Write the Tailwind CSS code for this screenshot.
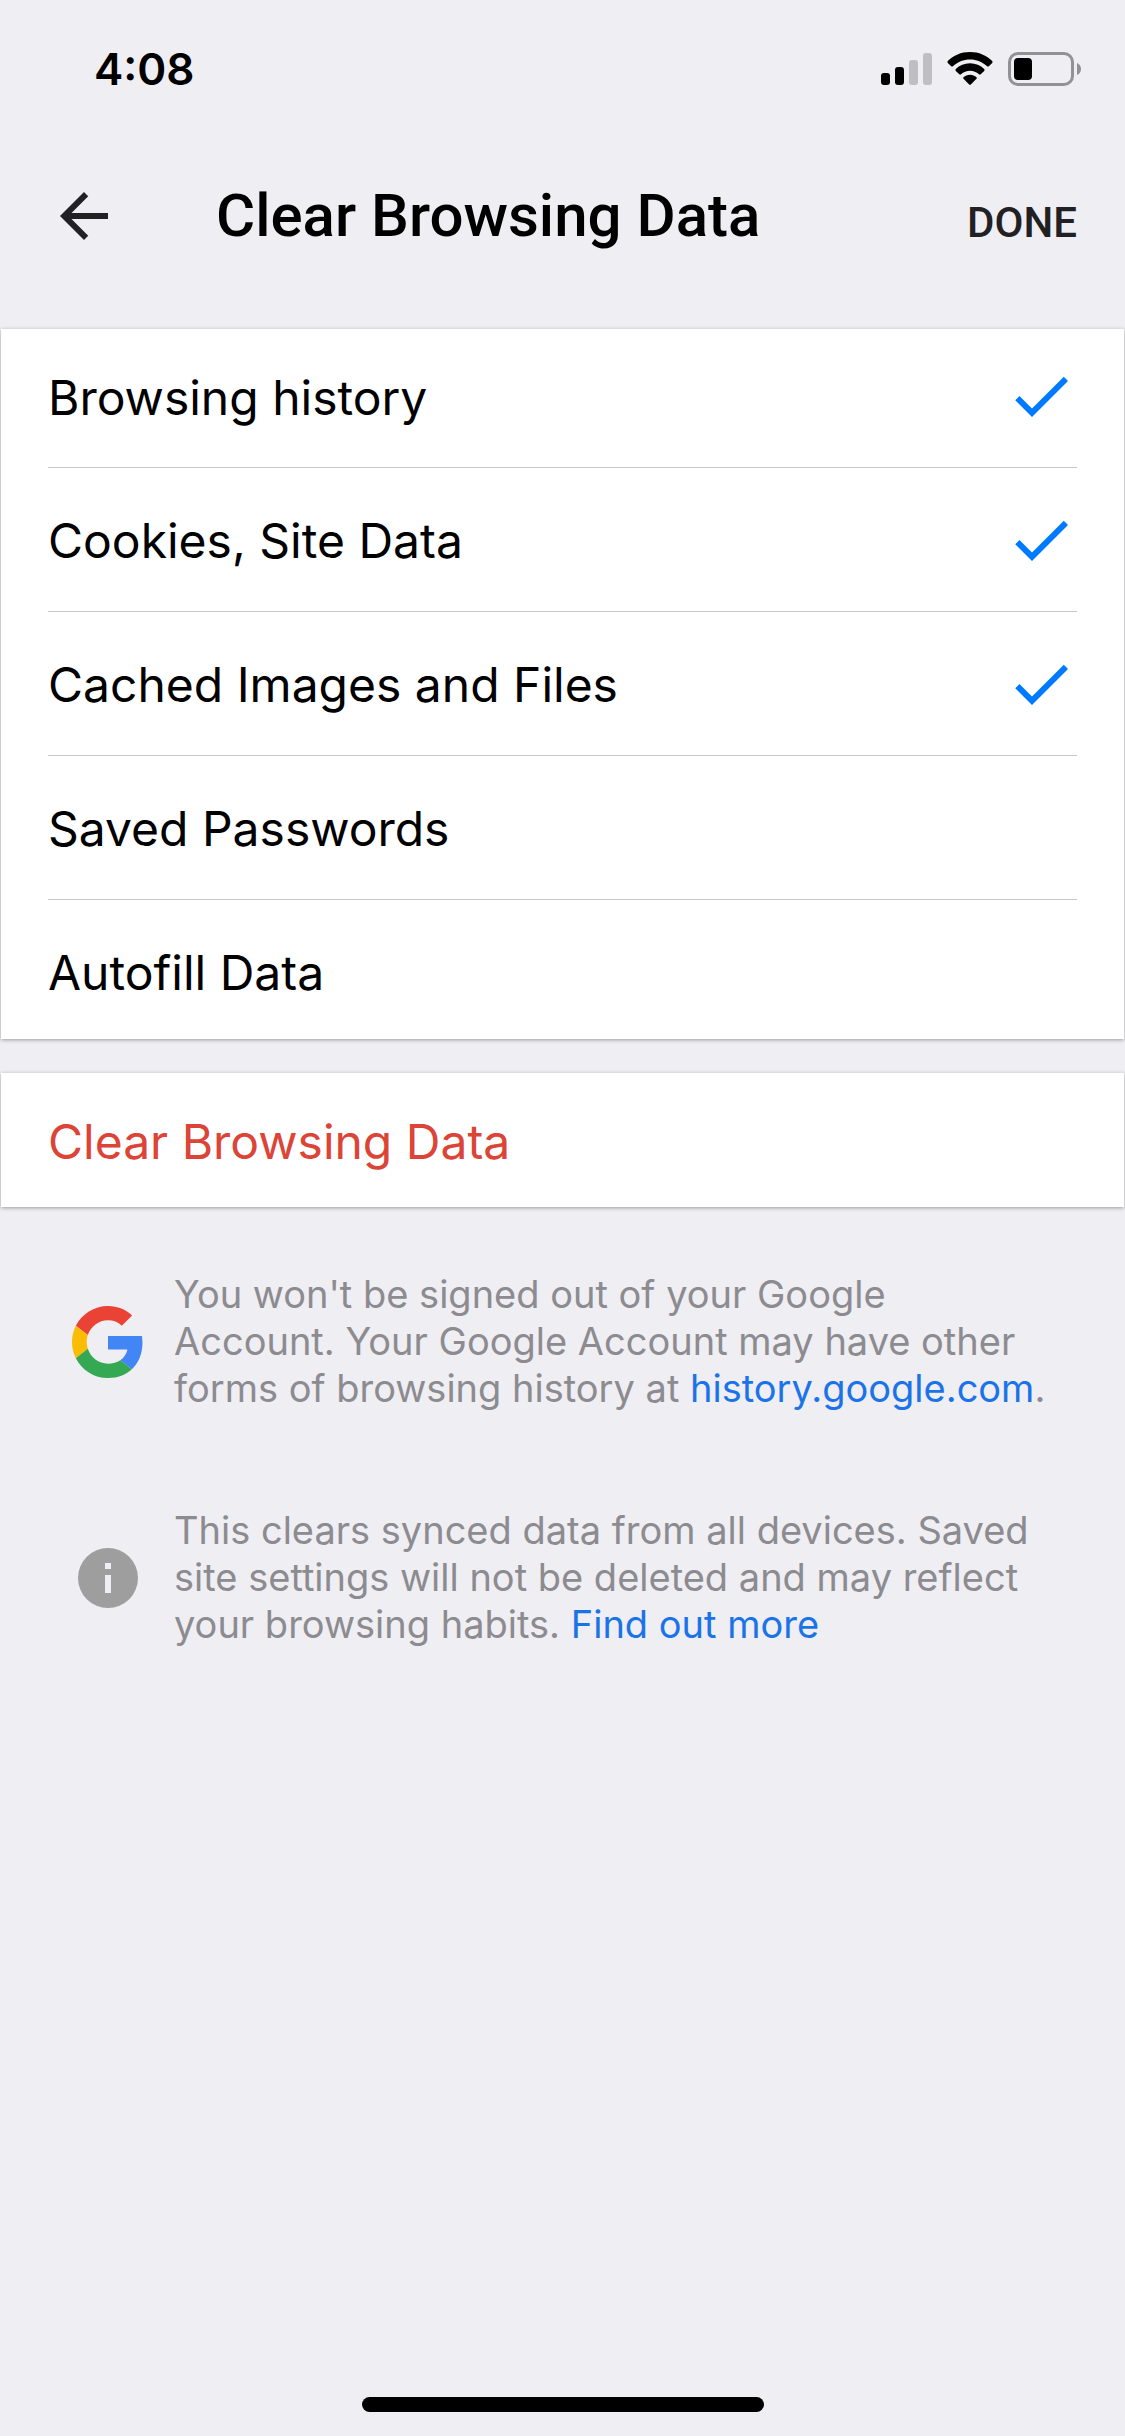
<!DOCTYPE html>
<html lang="en">
<head>
<meta charset="utf-8">
<meta name="viewport" content="width=device-width, initial-scale=1">
<title>Clear Browsing Data</title>
<script src="https://cdn.jsdelivr.net/npm/@tailwindcss/browser@4"></script>
</head>
<body class="flex min-h-screen flex-col bg-[#efeef3] font-['Inter',sans-serif] text-black">

  <!-- Status bar -->
  <div class="flex h-[138px] items-center justify-between pr-[44px] pl-[94px]">
    <time class="text-[44px] leading-[54px] font-semibold">4:08</time>
    <div class="flex items-center gap-[15px]">
      <svg class="h-[34px] w-[51px]" viewBox="0 0 51 34" aria-hidden="true">
        <rect x="0" y="21" width="9" height="12" rx="3"/>
        <rect x="14" y="15" width="9" height="18" rx="3"/>
        <rect x="28" y="8" width="9" height="25" rx="3" fill="#bfbec3"/>
        <rect x="42" y="1" width="9" height="32" rx="3" fill="#bfbec3"/>
      </svg>
      <svg class="h-[34px] w-[46px]" viewBox="0 0 46 34" aria-hidden="true">
        <path d="M23 0C32 0 39.500 3.400 45.200 9Q46 10 45.200 10.900L41.800 14.200Q41 14.900 40.100 14.200C35.500 9.800 29.500 7.400 23 7.400S10.500 9.800 5.900 14.200Q5 14.900 4.200 14.200L.8 10.900Q0 10 .8 9C6.500 3.400 14 0 23 0Z"/>
        <path d="M23 11.200C28.500 11.200 33.500 13.300 37.200 17.100Q38 18 37.200 18.900L33.700 22.300Q32.900 23 32 22.300C29.500 20 26.400 18.700 23 18.700S16.500 20 14 22.300Q13.100 23 12.300 22.300L8.800 18.900Q8 18 8.800 17.100C12.500 13.300 17.500 11.200 23 11.200Z"/>
        <path d="M23 22.800C25.500 22.800 27.800 23.700 29.500 25.200Q30.200 26 29.500 26.800L23.800 32.600Q23 33.200 22.200 32.600L16.500 26.800Q15.800 26 16.500 25.200C18.200 23.700 20.500 22.800 23 22.800Z"/>
      </svg>
      <svg class="h-[34px] w-[73px]" viewBox="0 0 73 34" aria-hidden="true">
        <rect x="1.500" y="1.500" width="63" height="31" rx="8.500" fill="none" stroke="#929196" stroke-width="3"/>
        <rect x="6" y="6" width="18" height="22" rx="4"/>
        <path d="M69 11c2.500 1 4 3.300 4 6s-1.500 5-4 6z" fill="#929196"/>
      </svg>
    </div>
  </div>

  <!-- Navigation -->
  <header class="flex h-[191px] items-start px-[48px] pt-[42px]">
    <button type="button" aria-label="Back" class="size-[72px] shrink-0">
      <svg class="size-[72px]" viewBox="0 0 24 24" fill="#212124"><path d="M20 11H7.830l5.590-5.590L12 4l-8 8 8 8 1.410-1.410L7.830 13H20z"/></svg>
    </button>
    <h1 class="ml-[96px] font-['Roboto',sans-serif] text-[60px] leading-[72px] font-medium">Clear Browsing Data</h1>
    <button type="button" class="mt-[7px] ml-auto font-['Roboto',sans-serif] text-[42px] leading-[72px] font-medium text-[#212124]">DONE</button>
  </header>

  <main>
    <form>
      <ul class="mx-px bg-white px-[47px] text-[48px] leading-[60px] shadow-[0_1px_4px_rgba(0,0,0,0.35)]">
        <li class="border-b border-[#c8c7cc]">
          <label class="flex h-[138px] items-center justify-between pb-1">
            <span class="pt-[3px]">Browsing history</span>
            <span class="grid">
              <input type="checkbox" checked class="peer col-start-1 row-start-1 size-[72px] appearance-none">
              <svg class="pointer-events-none invisible col-start-1 row-start-1 size-[72px] peer-checked:visible" viewBox="0 0 24 24" fill="#007aff"><path d="M9 16.170L4.830 12l-1.420 1.410L9 19 21 7l-1.410-1.410z"/></svg>
            </span>
          </label>
        </li>
        <li class="border-b border-[#c8c7cc]">
          <label class="flex h-[143px] items-center justify-between">
            <span class="pt-[3px]">Cookies, Site Data</span>
            <span class="grid">
              <input type="checkbox" checked class="peer col-start-1 row-start-1 size-[72px] appearance-none">
              <svg class="pointer-events-none invisible col-start-1 row-start-1 size-[72px] peer-checked:visible" viewBox="0 0 24 24" fill="#007aff"><path d="M9 16.170L4.830 12l-1.420 1.410L9 19 21 7l-1.410-1.410z"/></svg>
            </span>
          </label>
        </li>
        <li class="border-b border-[#c8c7cc]">
          <label class="flex h-[143px] items-center justify-between">
            <span class="pt-[3px]">Cached Images and Files</span>
            <span class="grid">
              <input type="checkbox" checked class="peer col-start-1 row-start-1 size-[72px] appearance-none">
              <svg class="pointer-events-none invisible col-start-1 row-start-1 size-[72px] peer-checked:visible" viewBox="0 0 24 24" fill="#007aff"><path d="M9 16.170L4.830 12l-1.420 1.410L9 19 21 7l-1.410-1.410z"/></svg>
            </span>
          </label>
        </li>
        <li class="border-b border-[#c8c7cc]">
          <label class="flex h-[143px] items-center justify-between">
            <span class="pt-[3px]">Saved Passwords</span>
            <span class="grid">
              <input type="checkbox" class="peer col-start-1 row-start-1 size-[72px] appearance-none">
              <svg class="pointer-events-none invisible col-start-1 row-start-1 size-[72px] peer-checked:visible" viewBox="0 0 24 24" fill="#007aff"><path d="M9 16.170L4.830 12l-1.420 1.410L9 19 21 7l-1.410-1.410z"/></svg>
            </span>
          </label>
        </li>
        <li>
          <label class="flex h-[139px] items-center justify-between pt-1">
            <span class="pt-[3px]">Autofill Data</span>
            <span class="grid">
              <input type="checkbox" class="peer col-start-1 row-start-1 size-[72px] appearance-none">
              <svg class="pointer-events-none invisible col-start-1 row-start-1 size-[72px] peer-checked:visible" viewBox="0 0 24 24" fill="#007aff"><path d="M9 16.170L4.830 12l-1.420 1.410L9 19 21 7l-1.410-1.410z"/></svg>
            </span>
          </label>
        </li>
      </ul>

      <div class="mx-px mt-[34px] bg-white shadow-[0_1px_4px_rgba(0,0,0,0.35)]">
        <button type="button" class="flex h-[134px] w-full items-center px-[47px] pt-[3px] text-left text-[48px] leading-[60px] text-[#db4437]">Clear Browsing Data</button>
      </div>
    </form>

    <section class="mt-[64px] flex flex-col gap-[95px] pr-[40px] pl-[72px] text-[38px] leading-[47px] text-[#8c8b90]">
      <div class="flex items-center gap-[30px]">
        <svg class="size-[72px] shrink-0" viewBox="0 0 48 48" role="img" aria-label="Google">
          <path fill="#ea4335" d="M24 9.500c3.540 0 6.710 1.220 9.210 3.600l6.850-6.850C35.900 2.380 30.470 0 24 0 14.620 0 6.510 5.380 2.560 13.220l7.980 6.190C12.430 13.720 17.740 9.500 24 9.500z"/>
          <path fill="#4285f4" d="M46.980 24.550c0-1.570-.15-3.090-.38-4.550H24v9.020h12.940c-.58 2.960-2.260 5.480-4.780 7.180l7.730 6c4.510-4.180 7.090-10.360 7.090-17.650z"/>
          <path fill="#fbbc05" d="M10.530 28.590c-.48-1.450-.76-2.990-.76-4.590s.27-3.140.76-4.590l-7.980-6.190C.92 16.460 0 20.120 0 24c0 3.880.92 7.540 2.560 10.780l7.970-6.190z"/>
          <path fill="#34a853" d="M24 48c6.480 0 11.930-2.130 15.890-5.810l-7.730-6c-2.150 1.450-4.920 2.300-8.160 2.300-6.260 0-11.570-4.220-13.470-9.910l-7.980 6.190C6.510 42.620 14.620 48 24 48z"/>
        </svg>
        <p>You won't be signed out of your Google<br>Account. Your Google Account may have other<br>forms of browsing history at <a href="#" class="text-[#1a73e8]">history.google.com</a>.</p>
      </div>
      <div class="flex items-center gap-[30px]">
        <svg class="size-[72px] shrink-0" viewBox="0 0 24 24" fill="#9e9e9e" aria-hidden="true"><path d="M12 2a10 10 0 1 0 0 20 10 10 0 0 0 0-20zm1 15h-2v-6h2zm0-8h-2V7h2z"/></svg>
        <p>This clears synced data from all devices. Saved<br>site settings will not be deleted and may reflect<br>your browsing habits. <a href="#" class="text-[#1a73e8]">Find out more</a></p>
      </div>
    </section>
  </main>

  <!-- Home indicator -->
  <div class="mt-auto flex justify-center pb-6">
    <div class="h-[15px] w-[402px] rounded-full bg-black"></div>
  </div>
</body>
</html>
